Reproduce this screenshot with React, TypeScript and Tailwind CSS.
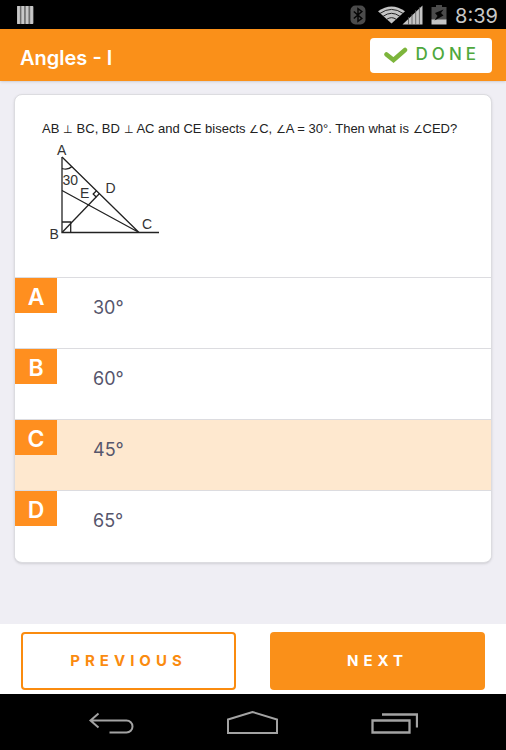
import { useState } from "react";

type Option = {
  letter: string;
  text: string;
};

const options: Option[] = [
  { letter: "A", text: "30°" },
  { letter: "B", text: "60°" },
  { letter: "C", text: "45°" },
  { letter: "D", text: "65°" },
];

function StatusBar() {
  return (
    <div className="flex h-[29px] items-center justify-between bg-black pr-2 pl-4">
      <svg width="18" height="18" viewBox="0 0 18 18" aria-hidden="true">
        <rect x="1" y="0" width="16.5" height="18" rx="1" fill="#8a8a8a" />
        <path d="M2.5 0v18M6.8 0v18M11.1 0v18M15.6 0v18" stroke="#c8c8c8" strokeWidth="2.6" />
        <path d="M4.6 0v18M8.9 0v18M13.3 0v18" stroke="#6a6a6a" strokeWidth="1" />
      </svg>

      <div className="flex items-center gap-2">
        <svg width="16" height="20" viewBox="0 0 16 20" aria-hidden="true">
          <rect x="0.5" y="0.5" width="15" height="19" rx="5" fill="#4b4b4b" />
          <path
            d="M3.8 6.5l8 7L8 16.300V3.700L11.800 6.500l-8 7"
            fill="none"
            stroke="#050505"
            strokeWidth="1.5"
          />
        </svg>
        <svg width="49" height="20" viewBox="0 0 49 20" aria-hidden="true">
          <path d="M4 6.2Q17.5-3.2 31 6.2L17.5 18.5Z" fill="#c4c4c4" />
          <path
            d="M6 8.4Q17.5 .4 29 8.400M9 11.400Q17.500 5.200 26 11.400M12.500 14.500Q17.500 10.800 22.500 14.500"
            fill="none"
            stroke="#222"
            strokeWidth="1"
          />
          <path d="M28.5 19.5L48.500 .5v19Z" fill="#c4c4c4" />
          <path d="M34.5 12v8M38 9v11M41.700 5v15M45.400 2v18" stroke="#555" strokeWidth="0.8" />
        </svg>
        <svg width="16" height="20" viewBox="0 0 16 20" aria-hidden="true">
          <path d="M5 0h6v2h4.5v13H.5V2H5Z" fill="#4b4b4b" />
          <path d="M.5 14.5h15v5H.5Z" fill="#c4c4c4" />
          <path d="M12.5 4.5L4 8l2.500 3L3.500 15.500l9-5-2.500-2.500Z" fill="#050505" />
        </svg>
        <span className="pt-[2px] text-xl leading-7 text-[#c8c8c8]">8:39</span>
      </div>
    </div>
  );
}

function MathSign({ children }: { children: string }) {
  return <span className="text-[11px]">{children}</span>;
}

function TriangleFigure() {
  return (
    <svg
      width="125"
      height="105"
      viewBox="0 0 125 105"
      role="img"
      aria-label="Triangle ABC"
      className="block"
    >
      <g fill="none" stroke="#222" strokeWidth="1.3">
        <path d="M22 18v75.500h97" />
        <path d="M22 18L99 93.500L22 51.500" />
        <path d="M22 93.500L59.500 54.500" />
        <path d="M22 29.500Q28 31.500 32 27.500" />
        <path d="M22 83h8.700v10.500" />
        <path d="M56.500 51.800L53.200 55l3.200 3.200" />
      </g>
      <g fill="#333" fontFamily="'Liberation Sans', Arial, sans-serif" fontSize="14">
        <text x="17" y="15.500">A</text>
        <text x="22.500" y="46">30</text>
        <text x="40" y="58.500">E</text>
        <text x="65.500" y="54">D</text>
        <text x="9.500" y="99.500">B</text>
        <text x="102" y="89.500">C</text>
      </g>
    </svg>
  );
}

function NavigationBar() {
  return (
    <nav className="flex h-14 items-center justify-center gap-[92px] bg-black pt-1">
      <button type="button" aria-label="Back">
        <svg width="46" height="24" viewBox="0 0 46 24" fill="none" stroke="#a3a3a3" strokeWidth="2">
          <path d="M10.500 1.500L2.500 8.500l8 7M2.500 8.500h36a6 6 0 0 1 0 12H21.500" />
        </svg>
      </button>
      <button type="button" aria-label="Home">
        <svg width="52" height="26" viewBox="0 0 52 26" fill="none" stroke="#a3a3a3" strokeWidth="2">
          <path d="M2 8.500L26.500 1L51 8.500v13.500H2Z" />
        </svg>
      </button>
      <button type="button" aria-label="Recent apps">
        <svg width="48" height="24" viewBox="0 0 48 24" fill="none" stroke="#a3a3a3" strokeWidth="2.3">
          <path d="M2.500 8.500h37v12h-37ZM12 2.500h35v13" />
        </svg>
      </button>
    </nav>
  );
}

export default function App() {
  const [selected, setSelected] = useState("C");

  return (
    <div className="flex min-h-screen flex-col bg-[#efeef4] font-['Inter',sans-serif]">
      <StatusBar />

      <header className="flex h-[52px] items-center justify-between bg-[#fa9019] pr-[14px] pl-5 shadow-sm">
        <h1 className="pt-[6px] text-xl leading-6 font-semibold text-white">Angles - I</h1>
        <button
          type="button"
          className="flex h-[35px] items-center gap-2 rounded bg-white pr-3 pl-[14px] text-[#4fa83d]"
        >
          <svg width="24" height="16" viewBox="0 0 24 16" fill="none" aria-hidden="true">
            <path d="M2.500 7.500l7 5.500L21 3" stroke="#7db53c" strokeWidth="4.500" strokeLinecap="round" />
          </svg>
          <span className="text-[17px] font-medium tracking-[4px]">DONE</span>
        </button>
      </header>

      <main className="flex-1 px-[14px] pt-[13px] pb-14">
        <section className="overflow-hidden rounded-lg border border-[#dcdce0] bg-white pb-px shadow-sm">
          <div className="min-h-[182px] pt-6 pb-7 pl-[25px]">
            <h2 className="pl-[2px] font-['Liberation_Sans',Arial,sans-serif] text-[13px] leading-5 text-[#222]">
              AB <MathSign>⊥</MathSign> BC, BD <MathSign>⊥</MathSign> AC and CE bisects{" "}
              <MathSign>∠</MathSign>C, <MathSign>∠</MathSign>A = 30°. Then what is{" "}
              <MathSign>∠</MathSign>CED?
            </h2>
            <TriangleFigure />
          </div>

          {options.map((option) => (
            <button
              key={option.letter}
              type="button"
              aria-pressed={selected === option.letter}
              onClick={() => setSelected(option.letter)}
              className={`flex min-h-[71px] w-full items-start gap-9 border-t border-[#dcdce0] text-left ${
                selected === option.letter ? "bg-[#fee8cf]" : "bg-white"
              }`}
            >
              <span className="flex h-[35px] w-[42px] items-center justify-center bg-[#ff8f1f] pt-1 text-[23px] font-semibold text-white">
                {option.letter}
              </span>
              <span className="pt-4 text-lg text-[#56566c]">{option.text}</span>
            </button>
          ))}
        </section>
      </main>

      <footer className="grid grid-cols-2 gap-[34px] bg-white px-[21px] pt-2 pb-1 text-[15px] font-bold">
        <button
          type="button"
          className="h-[58px] rounded border-2 border-[#fa8b0f] tracking-[5px] text-[#fa8b0f]"
        >
          PREVIOUS
        </button>
        <button type="button" className="h-[58px] rounded bg-[#fa9019] tracking-[5px] text-white">
          NEXT
        </button>
      </footer>

      <NavigationBar />
    </div>
  );
}
